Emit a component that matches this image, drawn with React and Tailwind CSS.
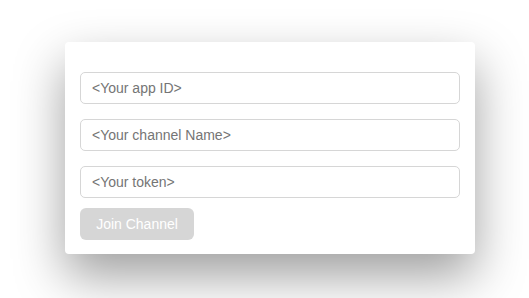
import React from "react";

function App() {
  return (
    <div className="min-h-screen w-full bg-white pl-[65px] pt-[42px]" style={{ fontFamily: '"Liberation Sans", Arial, sans-serif' }}>
      <div className="flex w-[410px] flex-col rounded-[4px] bg-white px-[15px] pt-[30px] pb-[14px] shadow-[0_22px_50px_rgba(0,0,0,0.38)]">
        <input
          type="text"
          placeholder="<Your app ID>"
          className="h-[32px] w-full rounded-[5px] border border-[#d6d6d6] px-[11px] text-[14px] text-[#555] placeholder-[#757575] focus:outline-none"
        />
        <input
          type="text"
          placeholder="<Your channel Name>"
          className="mt-[15px] h-[32px] w-full rounded-[5px] border border-[#d6d6d6] px-[11px] text-[14px] text-[#555] placeholder-[#757575] focus:outline-none"
        />
        <input
          type="text"
          placeholder="<Your token>"
          className="mt-[15px] h-[32px] w-full rounded-[5px] border border-[#d6d6d6] px-[11px] text-[14px] text-[#555] placeholder-[#757575] focus:outline-none"
        />
        <button
          disabled
          className="mt-[10px] h-[32px] w-[114px] rounded-[6px] bg-[#d6d6d6] text-[14px] text-white"
        >
          Join Channel
        </button>
      </div>
    </div>
  );
}

export default App;
